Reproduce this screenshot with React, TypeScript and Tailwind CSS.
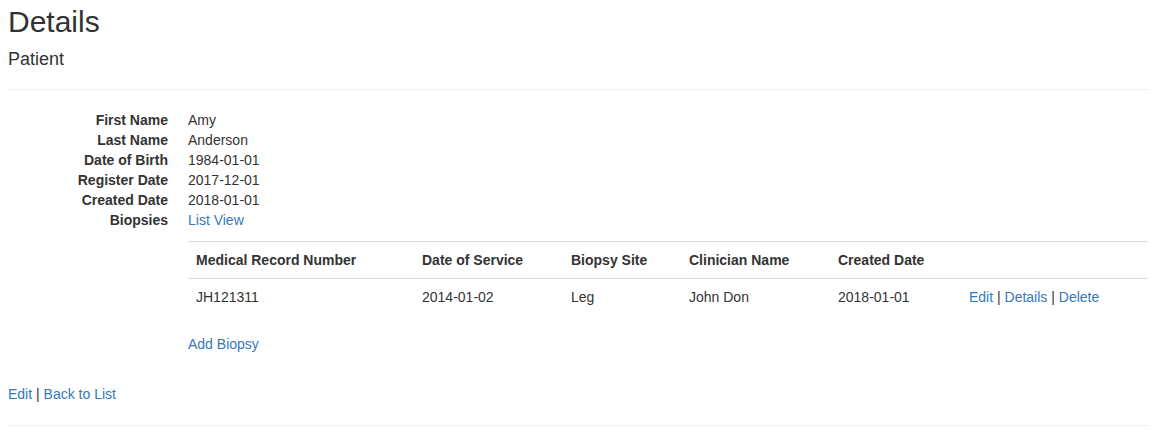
import React from "react";

const link = "text-[#337ab7] hover:underline";

export default function App() {
  const rows: [string, string][] = [
    ["First Name", "Amy"],
    ["Last Name", "Anderson"],
    ["Date of Birth", "1984-01-01"],
    ["Register Date", "2017-12-01"],
    ["Created Date", "2018-01-01"],
  ];
  return (
    <div
      className="bg-white text-[#333] text-[14px] leading-[20px] pl-2 pr-4 pt-[5px] min-h-[432px]"
      style={{ fontFamily: '"Liberation Sans", Arial, Helvetica, sans-serif' }}
    >
      <h2 className="text-[30px] leading-[33px] font-normal">Details</h2>
      <div className="mt-[11px]">
        <h4 className="text-[18px] leading-[20px] font-normal">Patient</h4>
        <hr className="mt-[20px] border-0 border-t border-[#eee]" />
        <div className="mt-[20px]">
          {rows.map(([k, v]) => (
            <div key={k} className="flex">
              <div className="w-[160px] text-right font-bold shrink-0">{k}</div>
              <div className="ml-[20px]">{v}</div>
            </div>
          ))}
          <div className="flex">
            <div className="w-[160px] text-right font-bold shrink-0">Biopsies</div>
            <div className="ml-[20px] flex-1">
              <a className={link} href="#">List View</a>
              <table className="w-full mt-[11px] border-collapse border-t border-[#ddd] text-left">
                <thead>
                  <tr className="border-b border-[#ddd]">
                    <th className="w-[226px] p-[8px] font-bold">Medical Record Number</th>
                    <th className="w-[149px] p-[8px] font-bold">Date of Service</th>
                    <th className="w-[118px] p-[8px] font-bold">Biopsy Site</th>
                    <th className="w-[149px] p-[8px] font-bold">Clinician Name</th>
                    <th className="w-[131px] p-[8px] font-bold">Created Date</th>
                    <th className="p-[8px]"></th>
                  </tr>
                </thead>
                <tbody>
                  <tr>
                    <td className="p-[8px]">JH121311</td>
                    <td className="p-[8px]">2014-01-02</td>
                    <td className="p-[8px]">Leg</td>
                    <td className="p-[8px]">John Don</td>
                    <td className="p-[8px]">2018-01-01</td>
                    <td className="p-[8px]">
                      <a className={link} href="#">Edit</a> |{" "}
                      <a className={link} href="#">Details</a> |{" "}
                      <a className={link} href="#">Delete</a>
                    </td>
                  </tr>
                </tbody>
              </table>
              <div className="mt-[19px]">
                <a className={link} href="#">Add Biopsy</a>
              </div>
            </div>
          </div>
        </div>
        <p className="mt-[30px]">
          <a className={link} href="#">Edit</a> |{" "}
          <a className={link} href="#">Back to List</a>
        </p>
        <hr className="mt-[21px] border-0 border-t border-[#eee]" />
      </div>
    </div>
  );
}
